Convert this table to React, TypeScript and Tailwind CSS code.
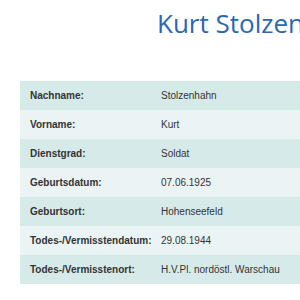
const rows: [string, string][] = [
  ['Nachname:', 'Stolzenhahn'],
  ['Vorname:', 'Kurt'],
  ['Dienstgrad:', 'Soldat'],
  ['Geburtsdatum:', '07.06.1925'],
  ['Geburtsort:', 'Hohenseefeld'],
  ['Todes-/Vermisstendatum:', '29.08.1944'],
  ['Todes-/Vermisstenort:', 'H.V.Pl. nordöstl. Warschau'],
];

export default function App() {
  return (
    <div className="h-[300px] w-[300px] overflow-hidden bg-white">
      <div className="w-[560px]">
        <h1 className="h-[81px] pl-[157px] pt-[10px] font-['Open_Sans',sans-serif] text-[26px] leading-[26px] font-normal text-[#2a68b3] whitespace-nowrap">
          Kurt Stolzenhahn
        </h1>
        <div className="ml-[20px] w-[520px] font-['Liberation_Sans',Arial,sans-serif] text-[10px] text-[#333]">
          {rows.map(([label, value], i) => (
            <div
              key={label}
              className={`grid h-[29px] grid-cols-[131px_1fr] items-center ${i % 2 === 0 ? 'bg-[#d7eaea]' : 'bg-[#eaf4f5]'}`}
            >
              <span className="pl-[10px] font-bold whitespace-nowrap">{label}</span>
              <span className="pl-[10px] whitespace-nowrap">{value}</span>
            </div>
          ))}
        </div>
      </div>
    </div>
  );
}
